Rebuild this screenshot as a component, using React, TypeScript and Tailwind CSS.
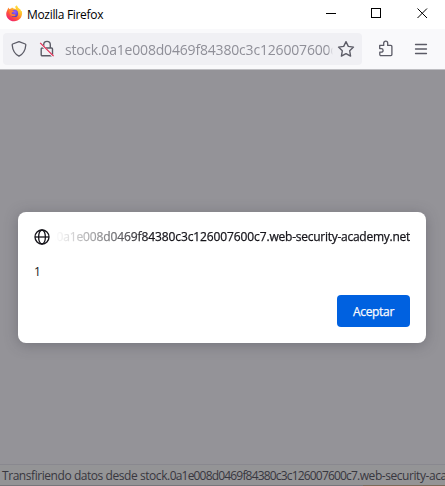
import React from "react";

function FirefoxLogo() {
  return (
    <svg width="17" height="17" viewBox="0 0 17 17" className="mt-[-2px] shrink-0">
      <defs>
        <linearGradient id="flame" x1="0.85" y1="0.05" x2="0.2" y2="0.95">
          <stop offset="0" stopColor="#fff044" />
          <stop offset="0.35" stopColor="#ffb52a" />
          <stop offset="0.65" stopColor="#ff5a36" />
          <stop offset="1" stopColor="#f01c75" />
        </linearGradient>
        <radialGradient id="globe" cx="0.55" cy="0.3" r="0.7">
          <stop offset="0" stopColor="#9b5cff" />
          <stop offset="1" stopColor="#4b3ac4" />
        </radialGradient>
      </defs>
      <path d="M2.4 2.5 3.2 4 5.2 3.5 6 2.6 7.7 3.6 10 4 9.1 1.8 10.8.2 12.2 2.7 14.4 4.4 15.2 6.3 15.7 5.7C17.3 11 13.8 16.3 8.3 16.3 2.7 16.3-.8 11.4.5 7.1Z" fill="url(#flame)" />
      <circle cx="8.5" cy="8.4" r="3.6" fill="url(#globe)" />
      <path d="M3 5.3C5 4.5 7 5 8.2 6.4L6.4 7.3 5.4 8.2 7 9.3C8.5 9 9.4 9.6 9.7 10.2 7.5 12.6 4.2 11 3.5 8.3Z" fill="#ff7e32" />
    </svg>
  );
}

function TitleBar() {
  return (
    <header className="flex h-[29px] items-center bg-white pl-[6px]">
      <FirefoxLogo />
      <h1 className="ml-[4px] flex-1 whitespace-nowrap font-['Open_Sans',sans-serif] text-[12px] leading-4 tracking-[-0.32px] text-black">Mozilla Firefox</h1>
      <svg width="104" height="14" viewBox="0 0 104 14" fill="none" stroke="#000" className="mr-[15px] mt-[6px] self-start">
        <path d="M0 7.5h10" />
        <rect x="45.5" y="2.5" width="9" height="9" />
        <path d="m91.5 2.5 9.5 9.5m0-9.5-9.5 9.5" />
      </svg>
    </header>
  );
}

function AddressBar() {
  return (
    <div className="flex h-10 items-center bg-[#f9f9fb] pl-[3px]">
      <div className="flex h-8 w-[359px] items-center rounded-[4px] bg-[#f0f0f4] pl-2">
        <svg width="16" height="18" viewBox="0 0 16 18" fill="none" stroke="#5b5b66" strokeWidth="1.3" strokeLinejoin="round">
          <path d="M8 1.7 14.3 4c.4.2.6.5.5 1-.4 5.3-2.3 8.9-6.8 11.2C3.5 13.9 1.6 10.3 1.2 5c0-.5.1-.8.5-1Z" />
        </svg>
        <svg width="16" height="18" viewBox="0 0 16 18" fill="none" className="ml-3">
          <g stroke="#5b5b66" strokeWidth="1.4">
            <path d="M4.7 8V4.7a3.3 3.3 0 0 1 6.6 0v3.3" />
            <path d="M3.7 8h8.8a1 1 0 0 1 1 1v5.8a1 1 0 0 1-1 1H3.2a1 1 0 0 1-1-1V9a1 1 0 0 1 1-1Z" />
          </g>
          <path d="m2 3 13 13" stroke="#f0f0f4" strokeWidth="2" transform="translate(-.6 .8)" />
          <path d="m1.2 2.8 13.4 13.4" stroke="#e22850" strokeWidth="1.2" />
        </svg>
        <div className="ml-[10px] mt-[1px] w-[268px] overflow-hidden whitespace-nowrap font-['Open_Sans',sans-serif] text-[14px] leading-5 tracking-[-0.18px] text-[#8f8f98] [mask-image:linear-gradient(to_right,black_98%,transparent)]"><span className="tracking-[-0.25px]">stock.</span>0a1e008d0469f84380c3c126007600c7.web-security-academy.net</div>
        <svg width="18" height="18" viewBox="0 0 18 18" fill="none" stroke="#5b5b66" strokeWidth="1.35" strokeLinejoin="round" className="ml-[4px] shrink-0">
          <path d="m9 1.6 2.3 4.8 5.2.7-3.8 3.7.9 5.3L9 13.6l-4.6 2.5.9-5.3-3.8-3.7 5.2-.7Z" />
        </svg>
      </div>
      <svg width="16" height="18" viewBox="0 0 16 18" fill="none" stroke="#5b5b66" strokeWidth="1.3" strokeLinejoin="round" className="ml-[16px]">
        <path d="M1.7 5.4h4V3.2a2 2 0 0 1 4 0v2.2h3.2c.6 0 1 .4 1 1v8.2c0 .6-.4 1-1 1H3c-.7 0-1.2-.5-1.2-1.2v-2.2h1.5a1.8 1.8 0 0 0 0-3.6H1.7Z" />
      </svg>
      <svg width="14" height="12" viewBox="0 0 14 12" stroke="#5b5b66" strokeWidth="1.3" className="ml-[20px]">
        <path d="M1.5 1.5h11m-11 4.5h11m-11 4.5h11" strokeLinecap="round" />
      </svg>
    </div>
  );
}

function AlertDialog() {
  return (
    <section role="dialog" className="flex h-[131px] w-[408px] flex-col rounded-[8px] bg-white px-4 pt-4 shadow-[0_2px_14px_rgba(58,57,68,0.35)]">
      <div className="flex h-[18px] items-center">
        <svg width="16" height="16" viewBox="0 0 16 16" fill="none" stroke="#15141a" strokeWidth="1.3" className="shrink-0">
          <circle cx="8" cy="8" r="7" />
          <ellipse cx="8" cy="8" rx="3.4" ry="7" />
          <path d="M1 8h14" />
        </svg>
        <div className="ml-[5px] flex w-[355px] justify-end overflow-hidden whitespace-nowrap font-['Open_Sans',sans-serif] text-[12px] font-medium leading-[18px] tracking-[-0.26px] text-[#15141a] [-webkit-text-stroke:0.25px_#15141a] [mask-image:linear-gradient(to_right,transparent,black_96px)]"><span className="tracking-[-0.11px]">stock.0a1e008d0469f84380c3c126007600c7.</span>web-security-academy.net</div>
      </div>
      <p className="mt-[17px] font-['Open_Sans',sans-serif] text-[12px] leading-[18px] text-[#15141a]">1</p>
      <button className="mt-[14px] h-8 w-[73px] self-end rounded-[4px] bg-[#0061e0] pt-[2px] font-['Open_Sans',sans-serif] text-[12px] font-medium tracking-[-0.3px] text-[#fbfbfe] [-webkit-text-stroke:0.25px_#fbfbfe]">Aceptar</button>
    </section>
  );
}

export default function App() {
  return (
    <div className="flex h-[486px] w-[445px] flex-col overflow-hidden bg-[#949398]">
      <TitleBar />
      <AddressBar />
      <main className="flex flex-1 flex-col items-center border-t border-[#bebec2] pt-[142px] pr-px">
        <AlertDialog />
      </main>
      <footer className="h-[21px] overflow-hidden whitespace-nowrap border-t border-t-[#89888f] bg-[#949496] pl-[2px] font-['Open_Sans',sans-serif] text-[12px] leading-[22px] tracking-[-0.44px] text-[#38373f]">Transfiriendo datos desde stock.<span className="tracking-[-0.82px]">0a1e008d0469f84380c3c126007600c7</span>.web-security-academy.net...</footer>
      <div className="flex h-px">
        <div className="w-[363px] bg-[#77767b]" />
        <div className="flex-1 bg-[#7a6a5a]" />
      </div>
    </div>
  );
}
